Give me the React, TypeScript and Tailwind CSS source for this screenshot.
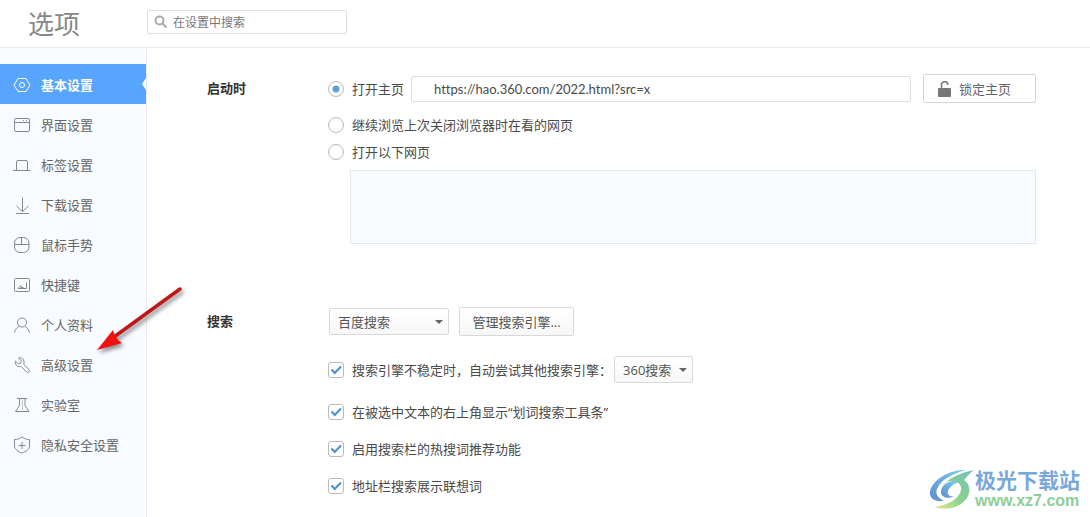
import { useState } from 'react';
import type { ReactNode } from 'react';

const navItems: { id: string; label: string; icon: ReactNode }[] = [
  {
    id: 'basic',
    label: '基本设置',
    icon: (
      <>
        <path d="M5 2.5h8l4 6.5-4 6.5H5L1 9z" />
        <circle cx="9" cy="9" r="2.5" />
      </>
    ),
  },
  {
    id: 'interface',
    label: '界面设置',
    icon: (
      <>
        <rect x="1.5" y="2.5" width="15" height="13" rx="1.5" />
        <path d="M1.5 6.5h15M10 4.5h1M13 4.5h1" />
      </>
    ),
  },
  {
    id: 'tabs',
    label: '标签设置',
    icon: <path d="M0 14.5h17.5M3.5 14.5V6A1.5 1.5 0 0 1 5 4.5h8A1.5 1.5 0 0 1 14.5 6v8.5" />,
  },
  {
    id: 'download',
    label: '下载设置',
    icon: <path d="M9.5 1.5v14M3.5 10l6 5.5 6-5.5M3 17.5h13" />,
  },
  {
    id: 'mouse',
    label: '鼠标手势',
    icon: (
      <>
        <rect x="1.500" y="1.500" width="14.500" height="15" rx="5.500" />
        <path d="M1.500 8.500h14.500M8.500 1.500v7" />
      </>
    ),
  },
  {
    id: 'shortcut',
    label: '快捷键',
    icon: (
      <>
        <rect x="1.5" y="2.5" width="15" height="13" rx="1" />
        <path d="M13.500 6.500v6H5l3-3v2h2.500" />
      </>
    ),
  },
  {
    id: 'profile',
    label: '个人资料',
    icon: (
      <>
        <circle cx="9" cy="6.5" r="4.500" />
        <path d="M1.5 16.5c.5-3 2.500-5 4.500-6M16.500 16.500c-.5-3-2.500-5-4.500-6" />
      </>
    ),
  },
  {
    id: 'advanced',
    label: '高级设置',
    icon: (
      <path d="M5.500 2l2.800 2.700-.6 2.300-2.400.7L2.500 5c-.6 2 .2 4 1.700 5 1.300.8 2.800.8 4 .4l5.300 5.400a1.600 1.600 0 0 0 2.500-2.300L10.700 8.300C11.500 6 11 4 9.500 2.700 8.300 1.700 7 1.500 5.500 2z" />
    ),
  },
  {
    id: 'lab',
    label: '实验室',
    icon: (
      <>
        <path d="M4 2.5h10M6.5 2.5v7l-4 6H16l-4-6v-7" />
        <path d="M9.5 4.5v9" strokeDasharray="1 1" />
      </>
    ),
  },
  {
    id: 'privacy',
    label: '隐私安全设置',
    icon: (
      <>
        <path d="M9 1c2.500 1.800 4.500 2.500 7.500 2.500V10c0 3.500-3.500 5.500-7.500 7-4-1.500-7.500-3.500-7.500-7V3.500C4.500 3.500 6.500 2.800 9 1z" />
        <path d="M5.500 9.500h7M9 6v7" />
      </>
    ),
  },
];

const startupOptions = [
  { id: 'resume', label: '继续浏览上次关闭浏览器时在看的网页' },
  { id: 'pages', label: '打开以下网页' },
];

const searchOptions = [
  { id: 'toolbar', label: '在被选中文本的右上角显示“划词搜索工具条”' },
  { id: 'hotwords', label: '启用搜索栏的热搜词推荐功能' },
  { id: 'suggest', label: '地址栏搜索展示联想词' },
];

const radioClass =
  'size-4 shrink-0 appearance-none rounded-full border border-[#bbb] bg-white checked:bg-[radial-gradient(circle,#5f9fdc_3px,white_4px)]';

function Checkbox({ id }: { id: string }) {
  return (
    <span className="relative size-4 shrink-0">
      <input
        id={id}
        type="checkbox"
        defaultChecked
        className="peer block size-4 appearance-none rounded-[3px] border border-[#bbb] bg-white"
      />
      <svg
        viewBox="0 0 16 16"
        className="pointer-events-none absolute inset-0 hidden size-4 peer-checked:block"
        fill="none"
        stroke="#4a90d2"
        strokeWidth="2"
      >
        <path d="M3.5 7.5l3.200 3.500L13 4.500" />
      </svg>
    </span>
  );
}

function Select({ label, options, className }: { label: string; options: string[]; className: string }) {
  return (
    <span className="relative">
      <select
        aria-label={label}
        className={`block h-[27px] appearance-none rounded-xs border border-[#d9d9d9] bg-linear-to-b from-white to-[#f7f7f7] pl-2 text-[#555] ${className}`}
      >
        {options.map((option) => (
          <option key={option}>{option}</option>
        ))}
      </select>
      <svg viewBox="0 0 8 4" className="pointer-events-none absolute top-3 right-1.5 h-1 w-2" fill="#666">
        <path d="M0 0h8L4 4z" />
      </svg>
    </span>
  );
}

function Watermark() {
  return (
    <div className="pointer-events-none absolute right-2.5 bottom-1.5 flex items-center">
      <svg viewBox="0 0 46 42" className="h-[42px] w-[46px]">
        <defs>
          <linearGradient id="swirl-blue" x1="0" y1="1" x2="1" y2="0">
            <stop offset="0" stopColor="#5f8fc8" />
            <stop offset="1" stopColor="#7ccaf5" />
          </linearGradient>
          <linearGradient id="swirl-green" x1="0" y1="1" x2="1" y2="0">
            <stop offset="0" stopColor="#e2ea8c" />
            <stop offset=".4" stopColor="#8fd48c" />
            <stop offset="1" stopColor="#6fbfb8" />
          </linearGradient>
        </defs>
        <path d="M37 1C22 0 4 10 1 22c-1 7 4 11 14 10-6-3-9-7-7-12C12 11 22 5 37 1z" fill="url(#swirl-blue)" />
        <path
          d="M31 13c-9-3-18 2-19 9-1 6 7 9 13 5-4 1-7-1-6-5 1-3 5-8 12-9z"
          fill="url(#swirl-blue)"
        />
        <path
          d="M45 1C34 3 23 8 17 13c9-3 16 1 15 8-2 9-12 15-27 17 12 4 26 1 33-9 4-7 3-14-3-18 3-4 6-7 10-10z"
          fill="url(#swirl-green)"
        />
      </svg>
      <div>
        <p className="text-[21px] leading-[22px] font-bold text-[#78a8da]">极光下载站</p>
        <p className="font-['Liberation_Sans',sans-serif] text-base leading-5 font-bold text-[#8bcf9a]">
          www.xz7.com
        </p>
      </div>
    </div>
  );
}

export default function App() {
  const [active, setActive] = useState('basic');
  const [startup, setStartup] = useState('home');

  return (
    <div className="relative flex min-h-screen flex-col bg-white font-['Open_Sans','Noto_Sans_CJK_SC',sans-serif] text-[13px] leading-4 text-[#4a4a4a]">
      <header className="flex h-12 items-center border-b border-[#ebebeb]">
        <h1 className="w-[147px] pl-7 text-[26px] leading-9 text-[#888]">选项</h1>
        <div className="relative mb-1">
          <svg
            viewBox="0 0 14 14"
            className="pointer-events-none absolute top-[5px] left-[7px] size-3.5"
            fill="none"
            stroke="#aaa"
            strokeWidth="2"
          >
            <circle cx="5.5" cy="5.5" r="4" />
            <path d="M8.5 8.5l4 4" />
          </svg>
          <input
            type="search"
            aria-label="在设置中搜索"
            placeholder="在设置中搜索"
            className="block h-6 w-[200px] rounded-xs border border-[#ddd] pt-0.5 pl-[25px] text-xs placeholder:text-[#777]"
          />
        </div>
      </header>

      <div className="flex flex-1">
        <nav className="w-[147px] shrink-0 border-r border-[#e6ebf0] bg-[#f8fbff] pt-4">
          {navItems.map((item) => (
            <a
              key={item.id}
              href={`#${item.id}`}
              onClick={() => setActive(item.id)}
              className={
                item.id === active
                  ? 'relative flex h-10 items-center gap-2.5 bg-[#57a5ff] pt-0.5 pl-[13px] font-bold text-white'
                  : 'flex h-10 items-center gap-2.5 pt-0.5 pl-[13px] text-[#666]'
              }
            >
              <svg
                viewBox="0 0 18 18"
                className="size-[18px] shrink-0"
                fill="none"
                stroke={item.id === active ? '#fff' : '#888'}
              >
                {item.icon}
              </svg>
              {item.label}
              {item.id === active && (
                <svg viewBox="0 0 4 12" className="absolute top-3.5 right-0 h-3 w-1" fill="#fff">
                  <path d="M4 0v12L0 6z" />
                </svg>
              )}
            </a>
          ))}
        </nav>

        <main className="flex-1 pt-[26px] pr-[54px] pl-[60px]">
          <section className="flex">
            <h2 className="w-[121px] shrink-0 leading-7 font-bold text-[#333]">启动时</h2>
            <div className="flex-1">
              <div className="flex items-center">
                <label className="flex items-center gap-2">
                  <input
                    type="radio"
                    name="startup"
                    checked={startup === 'home'}
                    onChange={() => setStartup('home')}
                    className={radioClass}
                  />
                  打开主页
                </label>
                <input
                  type="text"
                  aria-label="主页地址"
                  defaultValue="https://hao.360.com/2022.html?src=x"
                  className="ml-[7px] h-[26px] min-w-0 flex-1 rounded-xs border border-[#ddd] pl-[22px] font-['Lato','Noto_Sans_CJK_SC',sans-serif] [font-variant-ligatures:none]"
                />
                <button
                  type="button"
                  className="ml-3 flex h-[29px] w-[113px] items-center gap-2 rounded-xs border border-[#d5d5d5] pl-3.5 text-[#666]"
                >
                  <svg viewBox="0 0 13 16" className="h-4 w-[13px]" fill="none">
                    <rect y="7" width="13" height="9" rx="1" fill="#777" />
                    <path d="M3.5 7V4.500a3 3 0 0 1 6.500-1V4" stroke="#777" strokeWidth="1.5" />
                  </svg>
                  锁定主页
                </button>
              </div>
              <div className="mt-3.5 flex flex-col gap-[11px]">
                {startupOptions.map((option) => (
                  <label key={option.id} className="flex items-center gap-2">
                    <input
                      type="radio"
                      name="startup"
                      checked={startup === option.id}
                      onChange={() => setStartup(option.id)}
                      className={radioClass}
                    />
                    {option.label}
                  </label>
                ))}
              </div>
              <div className="mt-2.5 pl-[22px]">
                <textarea
                  aria-label="打开以下网页"
                  className="block h-[74px] w-full resize-none border border-[#e1e8ef] bg-[#f8fbff] p-2"
                />
              </div>
            </div>
          </section>

          <section className="mt-[63px] flex">
            <h2 className="w-[121px] shrink-0 leading-7 font-bold text-[#333]">搜索</h2>
            <div className="flex-1">
              <div className="flex items-center gap-2.5 pl-px">
                <Select label="默认搜索引擎" options={['百度搜索', '360搜索']} className="w-[120px]" />
                <button
                  type="button"
                  className="h-[29px] w-[115px] rounded-xs border border-[#d9d9d9] bg-linear-to-b from-white to-[#f7f7f7] text-[#555]"
                >
                  管理搜索引擎...
                </button>
              </div>
              <div className="mt-5 flex items-center gap-0.5">
                <Checkbox id="fallback" />
                <label htmlFor="fallback" className="pl-1.5">
                  搜索引擎不稳定时，自动尝试其他搜索引擎：
                </label>
                <Select label="备用搜索引擎" options={['360搜索', '百度搜索']} className="w-[79px]" />
              </div>
              <div className="mt-[21px] flex flex-col gap-[21px]">
                {searchOptions.map((option) => (
                  <div key={option.id} className="flex items-center gap-2">
                    <Checkbox id={option.id} />
                    <label htmlFor={option.id}>{option.label}</label>
                  </div>
                ))}
              </div>
            </div>
          </section>
        </main>
      </div>

      <svg
        viewBox="0 0 92 70"
        className="pointer-events-none absolute top-[285px] left-24 h-[70px] w-[92px] drop-shadow-[2px_3px_2px_rgba(0,0,0,0.45)]"
      >
        <path d="M84 4L18 52" stroke="#c01818" strokeWidth="3.5" strokeLinecap="round" />
        <path d="M1 65l16-20 2 6 4 5 3 2z" fill="#f01010" />
      </svg>

      <Watermark />
    </div>
  );
}
